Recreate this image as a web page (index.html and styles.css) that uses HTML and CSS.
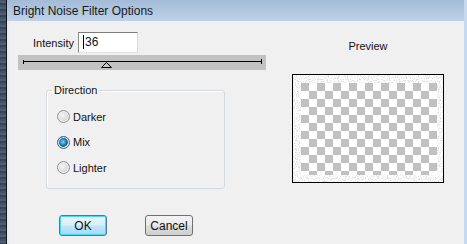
FILE: index.html
```html
<!DOCTYPE html>
<html lang="en">
  <head>
    <title>Bright Noise Filter Options</title>
    <link rel="stylesheet" href="styles.css">
  </head>
  <body>
    <div class="screen">
      <div class="desktop"></div>
      <div class="window">
        <div class="titlebar">Bright Noise Filter Options</div>
        <div class="client">
          <div class="settings">
            <div class="intensity">
              <label>Intensity</label>
              <div class="textbox"><span class="caret"></span>36</div>
            </div>
            <div class="slider">
              <svg width="248" height="15" viewBox="0 0 248 15">
                <line x1="5" y1="6.5" x2="244" y2="6.5" stroke="#000" stroke-width="1"/>
                <line x1="5.5" y1="5" x2="5.5" y2="9" stroke="#000" stroke-width="1"/>
                <line x1="243.5" y1="4" x2="243.5" y2="9" stroke="#000" stroke-width="1"/>
                <path d="M88.5 7.5 L93.5 12.5 L83.5 12.5 Z" fill="#c8c8c8" stroke="#000" stroke-width="1"/>
              </svg>
            </div>
            <fieldset class="group">
              <legend>Direction</legend>
              <div class="option"><span class="radio"></span>Darker</div>
              <div class="option"><span class="radio checked"></span>Mix</div>
              <div class="option"><span class="radio"></span>Lighter</div>
            </fieldset>
            <div class="buttons">
              <button class="default">OK</button>
              <button>Cancel</button>
            </div>
          </div>
          <div class="preview">
            <div class="preview-label">Preview</div>
            <div class="preview-box">
              <svg width="150" height="107" viewBox="0 0 150 107">
                <defs>
                  <filter id="speckle" x="0" y="0" width="100%" height="100%">
                    <feTurbulence type="fractalNoise" baseFrequency="0.9" numOctaves="1" seed="4"/>
                    <feColorMatrix type="matrix" values="0 0 0 0 0.72  0 0 0 0 0.72  0 0 0 0 0.72  5 0 0 0 -2.4"/>
                  </filter>
                  <pattern id="checker" x="8" y="8" width="16" height="16" patternUnits="userSpaceOnUse">
                    <rect width="16" height="16" fill="#fff"/>
                    <rect width="8" height="8" fill="#c0c0c0"/>
                    <rect x="8" y="8" width="8" height="8" fill="#c0c0c0"/>
                  </pattern>
                </defs>
                <rect width="150" height="107" fill="#fff"/>
                <rect width="150" height="107" filter="url(#speckle)"/>
                <rect x="8" y="8" width="136" height="92" fill="url(#checker)"/>
              </svg>
            </div>
          </div>
        </div>
      </div>
    </div>
  </body>
</html>
```

FILE: styles.css
```css
html {
  font-family: "Liberation Sans", Arial, sans-serif;
  font-size: 11px;
}

body {
  margin: 0;
  background: #f0f0f0;
  color: #111;
  overflow: hidden;
}

.screen {
  display: flex;
  width: 467px;
  height: 244px;
}

.desktop {
  width: 6px;
  border-right: 1px solid #101418;
  background: repeating-linear-gradient(180deg, #3a4a60 0px, #55677f 2px, #2c394b 4px, #4a5b72 6px);
}

.window {
  flex: 1;
  display: flex;
  flex-flow: column;
  border-right: 3px solid #c6d9ee;
}

.titlebar {
  height: 21px;
  padding-left: 6px;
  line-height: 22px;
  font-size: 12px;
  color: #1a1a1a;
  background: linear-gradient(180deg, #a3bbd7 0%, #b3c9e1 60%, #bed3ea 100%);
}

.client {
  flex: 1;
  display: flex;
  flex-flow: row;
  border-left: 3px solid #e4ecf5;
}

.settings {
  width: 254px;
  padding: 11px 0 0 8px;
}

.intensity {
  display: flex;
  flex-flow: row;
  align-items: center;
  height: 21px;
  margin-left: 15px;
  gap: 4px;
}

.textbox {
  box-sizing: border-box;
  width: 60px;
  height: 21px;
  padding: 2px 0 0 4px;
  border: 1px solid;
  border-color: #7c7c7c #d9d9d9 #e3e3e3 #8a8a8a;
  background: #fff;
  font-size: 12px;
  line-height: 15px;
}

.caret {
  display: inline-block;
  width: 1px;
  height: 14px;
  margin-right: 1px;
  vertical-align: -3px;
  background: #000;
}

.slider {
  width: 248px;
  height: 15px;
  margin-top: 2px;
  background: #c2c2c2;
}

.slider svg {
  display: block;
}

.group {
  box-sizing: border-box;
  width: 179px;
  margin: 14px 0 0 28px;
  padding: 0 0 14px 10px;
  border: 1px solid #d4d9dd;
  border-radius: 3px;
  box-shadow: inset 1px 1px 0 #fff;
}

.group legend {
  margin-left: -5px;
  padding: 0 2px;
  line-height: 13px;
}

.option {
  display: flex;
  flex-flow: row;
  align-items: center;
  gap: 3px;
  height: 13px;
  margin-top: 12.5px;
}

.option:first-of-type {
  margin-top: 13px;
}

.radio {
  box-sizing: border-box;
  width: 13px;
  height: 13px;
  border: 1px solid #8f8f8f;
  border-radius: 50%;
  background: radial-gradient(circle at 40% 40%, #f4f4f4 0%, #dcdcdc 55%, #c4c4c4 100%);
  box-shadow: inset 0 0 0 1px #f2f2f2;
}

.radio.checked {
  border-color: #2c628b;
  background: radial-gradient(circle at 45% 45%, #8fd0f4 0%, #2f8fd0 30%, #14507f 55%, #e6eef4 62%, #d0d8de 100%);
}

.buttons {
  display: flex;
  flex-flow: row;
  gap: 38px;
  margin: 26px 0 0 41px;
}

button {
  box-sizing: border-box;
  width: 48px;
  height: 21px;
  padding: 0;
  border: 1px solid #707070;
  border-radius: 3px;
  font-family: "Liberation Sans", Arial, sans-serif;
  font-size: 12px;
  color: #111;
  background: linear-gradient(180deg, #f3f3f3 0%, #ebebeb 48%, #dddddd 52%, #cfcfcf 100%);
}

button.default {
  border-color: #3c7fb1;
  background: linear-gradient(180deg, #e9f5fc 0%, #d9effb 48%, #bee6fd 52%, #a7d9f5 100%);
  box-shadow: inset 0 0 0 1px #48d8f8;
}

.preview {
  flex: 1;
  display: flex;
  flex-flow: column;
  align-items: center;
  padding-top: 19px;
}

.preview-label {
  line-height: 13px;
}

.preview-box {
  margin-top: 21px;
  border: 1px solid #000;
  width: 150px;
  height: 107px;
}

.preview-box svg {
  display: block;
}
```
